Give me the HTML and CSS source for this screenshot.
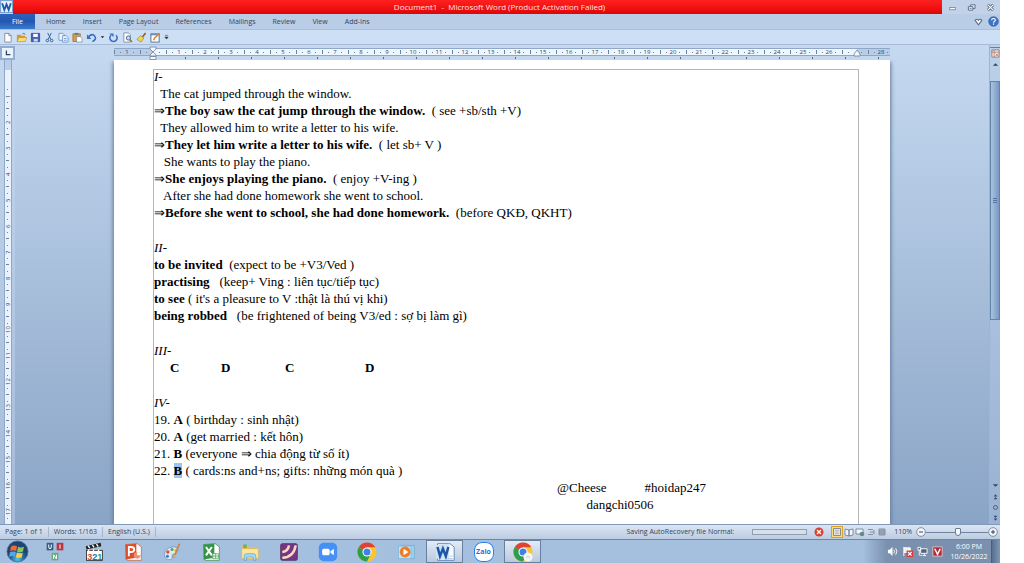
FILE: index.html
```
<!DOCTYPE html>
<html lang="vi">
<head>
  <meta charset="utf-8">
  <title>Document1 - Microsoft Word</title>
  <link rel="stylesheet" href="styles.css">
</head>
<body>
  <div class="desktop">
    <header class="titlebar">
      <svg class="app-icon" viewBox="0 0 12 12"><rect x=".5" y=".5" width="11" height="11" fill="#e8f2fc" stroke="#7ba4d4"/><path d="M2 3l2 6 2-5 2 5 2-6" fill="none" stroke="#1c5aa8" stroke-width="1.7"/></svg>
      <div class="title">Document1&nbsp; -&nbsp; Microsoft Word (Product Activation Failed)</div>
      <div class="window-buttons">
        <button aria-label="Minimize"><svg viewBox="0 0 10 10"><rect x="2" y="5" width="6" height="2.5" fill="#fff" stroke="#66778e" stroke-width=".8"/></svg></button>
        <button aria-label="Restore"><svg viewBox="0 0 10 10" fill="#eef4fb" stroke="#56677f"><path d="M4 2h5v4H4z"/><path d="M1.500 4h5v4h-5zM3 6h2"/></svg></button>
        <button aria-label="Close"><svg viewBox="0 0 10 10" fill="none"><path d="M2 2l6 6M8 2L2 8" stroke="#56677f" stroke-width="3"/><path d="M2 2l6 6M8 2L2 8" stroke="#fff" stroke-width="1.200"/></svg></button>
      </div>
    </header>

    <nav class="tabs">
      <button class="tab tab-file">File</button>
      <button class="tab">Home</button>
      <button class="tab">Insert</button>
      <button class="tab">Page Layout</button>
      <button class="tab">References</button>
      <button class="tab">Mailings</button>
      <button class="tab">Review</button>
      <button class="tab">View</button>
      <button class="tab">Add-Ins</button>
      <div class="tabs-right">
        <button aria-label="Expand ribbon"><svg viewBox="0 0 10 10"><path d="M2 4q1.500-2 3 0q1.500-2 3 0L5 8z" fill="#fff" stroke="#5d6f88"/></svg></button>
        <button aria-label="Help"><svg viewBox="0 0 12 12"><circle cx="6" cy="6" r="5.300" fill="#3d74c8" stroke="#2a559c" stroke-width=".6"/><path d="M4 4.700q0-2 2-2t2 1.700q0 1-1 1.500T6 7.300M6 8.300v1.300" fill="none" stroke="#fff" stroke-width="1.300"/></svg></button>
      </div>
    </nav>

    <div class="quick-access">
      <button aria-label="New"><svg viewBox="0 0 12 12"><path d="M3 1.500h4.500L10 4v7H3z" fill="#fff" stroke="#68788f" stroke-width=".8"/><path d="M7.500 1.500V4H10" fill="none" stroke="#68788f" stroke-width=".8"/></svg></button>
      <button aria-label="Open"><svg viewBox="0 0 12 12"><path d="M1 3h4l1 1h4v6H1z" fill="#d69a28"/><path d="M3 6h9l-2 4.500H1z" fill="#fbdc7c" stroke="#b9821d" stroke-width=".6"/><path d="M7 2q2-2 3 1" fill="none" stroke="#4776b5"/></svg></button>
      <button aria-label="Save"><svg viewBox="0 0 12 12"><path d="M1.500 1.500h9v9h-9z" fill="#4660b4" stroke="#2c3f87" stroke-width=".8"/><path d="M3.500 2h5v3.500h-5z" fill="#fff"/><path d="M4 7.500h4.500v3H4z" fill="#c9d4ee"/></svg></button>
      <button aria-label="Cut"><svg viewBox="0 0 12 12" fill="none" stroke="#36598f"><path d="M4 1l3.500 7M8 1L4.500 8"/><circle cx="3.700" cy="9.300" r="1.400"/><circle cx="8.300" cy="9.300" r="1.400"/></svg></button>
      <button aria-label="Copy"><svg viewBox="0 0 12 12" fill="#edf4fd" stroke="#5b86c0" stroke-width=".8"><path d="M1 1.500h4L7 3v6H1z"/><path d="M5 4h4l2 2v5H5z"/><path d="M6.500 7h3M6.500 9h3"/></svg></button>
      <button aria-label="Paste"><svg viewBox="0 0 12 12"><rect x="1" y="2" width="8" height="8.500" fill="#d8a03c" stroke="#96671a" stroke-width=".7"/><rect x="3" y="1" width="4" height="2" fill="#68788f"/><path d="M5 5h4l2 2v4H5z" fill="#fff" stroke="#6f7d90" stroke-width=".7"/></svg></button>
      <button aria-label="Undo"><svg viewBox="0 0 12 12"><path d="M3 5q4-4 6.500-.5T7 10.500" fill="none" stroke="#3a6fc0" stroke-width="1.800"/><path d="M1 2.500v5h5z" fill="#3a6fc0"/></svg></button>
      <button class="small-arrow" aria-label="Undo list"><svg viewBox="0 0 6 6"><path d="M1 2h4L3 4.500z" fill="#222"/></svg></button>
      <button aria-label="Repeat"><svg viewBox="0 0 12 12"><path d="M3.200 3.500a4 4 0 1 0 5.600 0" fill="none" stroke="#3a6fc0" stroke-width="1.700"/><path d="M1.500 1.500h4.500v4z" fill="#3a6fc0"/></svg></button>
      <button aria-label="Print preview"><svg viewBox="0 0 12 12"><path d="M2 1h5l2 2v8H2z" fill="#fff" stroke="#68788f" stroke-width=".8"/><circle cx="7" cy="6.500" r="2.300" fill="#c5dcf5" stroke="#4d6486"/><path d="M8.500 8.500l2.500 2.500" stroke="#9b6d2d" stroke-width="1.500"/></svg></button>
      <button aria-label="Format painter"><svg viewBox="0 0 12 12"><path d="M10.500 1L7 5.500" stroke="#8b6128" stroke-width="1.700"/><path d="M5 4l3.500 2.500L5.500 11 1 8z" fill="#f2d552" stroke="#9d8125" stroke-width=".7"/></svg></button>
      <button aria-label="Edit"><svg viewBox="0 0 12 12"><rect x="1" y="2" width="9" height="9" fill="#fff" stroke="#4c6d9c"/><path d="M1 3h9" stroke="#4c6d9c"/><path d="M4 9l1-2.500L10.500 1.500" fill="none" stroke="#d18a35" stroke-width="1.600"/></svg></button>
      <button class="small-arrow" aria-label="Customize"><svg viewBox="0 0 6 6"><path d="M1 1h4M1 3h4L3 5.500z" fill="#333" stroke="#333" stroke-width=".6"/></svg></button>
    </div>

    <div class="workspace">
      <div class="side-ruler">
        <button class="tab-selector" aria-label="Tab selector"><svg viewBox="0 0 10 10"><path d="M3 2v5h5" fill="none" stroke="#35465e" stroke-width="1.600"/></svg></button>
        <div class="v-ruler">
          <span></span><span>1</span><span>2</span><span>3</span><span>4</span><span>5</span><span>6</span><span>7</span><span>8</span><span>9</span><span>10</span><span>11</span><span>12</span><span>13</span><span>14</span><span>15</span><span>16</span><span>17</span>
        </div>
      </div>

      <main class="canvas">
        <div class="ruler-row">
          <div class="h-ruler">
            <span>1</span><span></span><span>1</span><span>2</span><span>3</span><span>4</span><span>5</span><span>6</span><span>7</span><span>8</span><span>9</span><span>10</span><span>11</span><span>12</span><span>13</span><span>14</span><span>15</span><span>16</span><span>17</span><span>18</span><span>19</span><span>20</span><span>21</span><span>22</span><span>23</span><span>24</span><span>25</span><span>26</span><span></span><span>28</span>
          </div>
          <svg class="indent indent-left" viewBox="0 0 8 14" fill="#f3f8fe" stroke="#71829b" stroke-width=".8"><path d="M1 1h6v2L4 6 1 3zM4 6l3 3v1H1V9zM1 10.500h6v3H1z"/></svg>
          <svg class="indent indent-right" viewBox="0 0 8 8" fill="#f3f8fe" stroke="#71829b" stroke-width=".8"><path d="M4 1l3 4v2H1V5z"/></svg>
        </div>
        <article class="page">
          <div class="text-area">
            <section>
              <p><i>I-</i></p>
              <p>  The cat jumped through the window.</p>
              <p>⇒<b>The boy saw the cat jump through the window.</b>  ( see +sb/sth +V)</p>
              <p>  They allowed him to write a letter to his wife.</p>
              <p>⇒<b>They let him write a letter to his wife.</b>  ( let sb+ V )</p>
              <p>   She wants to play the piano.</p>
              <p>⇒<b>She enjoys playing the piano.</b>  ( enjoy +V-ing )</p>
              <p>   After she had done homework she went to school.</p>
              <p>⇒<b>Before she went to school, she had done homework.</b>  (before QKĐ, QKHT)</p>
            </section>
            <section>
              <p><i>II-</i></p>
              <p><b>to be invited</b>  (expect to be +V3/Ved )</p>
              <p><b>practising</b>   (keep+ Ving : liên tục/tiếp tục)</p>
              <p><b>to see</b> ( it's a pleasure to V :thật là thú vị khi)</p>
              <p><b>being robbed</b>   (be frightened of being V3/ed : sợ bị làm gì)</p>
            </section>
            <section>
              <p><i>III-</i></p>
              <p class="answers"><b>C</b><b>D</b><b>C</b><b>D</b></p>
            </section>
            <section>
              <p><i>IV-</i></p>
              <p>19. <b>A</b> ( birthday : sinh nhật)</p>
              <p>20. <b>A</b> (get married : kết hôn)</p>
              <p>21. <b>B</b> (everyone ⇒ chia động từ số ít)</p>
              <p>22. <b class="selected">B</b> ( cards:ns and+ns; gifts: những món quà )</p>
            </section>
            <footer class="signature">
              <p><span>@Cheese</span><span>#hoidap247</span></p>
              <p>dangchi0506</p>
            </footer>
          </div>
        </article>
      </main>

      <div class="scrollbar">
        <div class="split"></div>
        <button class="ruler-toggle" aria-label="View ruler"><svg viewBox="0 0 10 10"><path d="M1 1h8v8H1z" fill="#fbefea" stroke="#8d7c83"/><path d="M1 3.500h8M3.500 1v8M5 5l3 3M8 5L5 8" stroke="#a1655e" stroke-width=".8"/></svg></button>
        <button aria-label="Scroll up"><svg viewBox="0 0 10 10"><path d="M2 6.500h6L5 3.500z" fill="#35465e"/></svg></button>
        <div class="track"><div class="thumb"></div></div>
        <button aria-label="Scroll down"><svg viewBox="0 0 10 10"><path d="M2 3.500h6L5 6.500z" fill="#35465e"/></svg></button>
        <button aria-label="Previous page"><svg viewBox="0 0 10 10"><path d="M3 5h4L5 2.500zM3 8h4L5 5.500z" fill="#35465e"/></svg></button>
        <button aria-label="Select browse object"><svg viewBox="0 0 10 10"><circle cx="5" cy="5" r="2.200" fill="none" stroke="#45566e"/></svg></button>
        <button aria-label="Next page"><svg viewBox="0 0 10 10"><path d="M3 2h4L5 4.500zM3 5h4L5 7.500z" fill="#35465e"/></svg></button>
      </div>
    </div>

    <div class="statusbar">
      <span class="status-item">Page: 1 of 1</span>
      <span class="status-item">Words: 1/163</span>
      <span class="status-item">English (U.S.)</span>
      <label class="saving" for="recovery">Saving AutoRecovery file Normal:</label>
      <progress id="recovery" value="0" max="100"></progress>
      <button class="cancel" aria-label="Cancel"><svg viewBox="0 0 10 10"><circle cx="5" cy="5" r="4.500" fill="#d8402f"/><path d="M3 3l4 4M7 3L3 7" stroke="#fff" stroke-width="1.300"/></svg></button>
      <div class="views">
        <button class="view-active" aria-label="Print layout"><svg viewBox="0 0 10 10"><path d="M1.500 1.500h7v7h-7z" fill="#e3e3df" stroke="#8a8c92"/><path d="M3 3.500h4M3 5h4M3 6.500h4" stroke="#a9adb5" stroke-width=".7"/></svg></button>
        <button aria-label="Full screen reading"><svg viewBox="0 0 10 10" fill="#f3f6fa" stroke="#67788f" stroke-width=".8"><path d="M1 2l4 1v6L1 8zM9 2L5 3v6l4-1z"/></svg></button>
        <button aria-label="Web layout"><svg viewBox="0 0 10 10"><path d="M1 2h7v5H1z" fill="#f3f6fa" stroke="#67788f" stroke-width=".8"/><circle cx="7" cy="7" r="2.300" fill="#5c8f87"/></svg></button>
        <button aria-label="Outline"><svg viewBox="0 0 10 10" fill="none" stroke="#8090a6"><path d="M2 2.500h5M4 5h4M2 7.500h5M8 3v4"/></svg></button>
        <button aria-label="Draft"><svg viewBox="0 0 10 10" fill="#a3b0c2" stroke="#8090a6"><path d="M2 2h6v6H2zM2 4h6M2 6h6"/></svg></button>
      </div>
      <label class="zoom-value" for="zoom">110%</label>
      <button class="round" aria-label="Zoom out"><svg viewBox="0 0 10 10"><circle cx="5" cy="5" r="4.300" fill="#f2f5fa" stroke="#67778f" stroke-width=".8"/><path d="M3 5h4" stroke="#34455d"/></svg></button>
      <input id="zoom" class="zoom" type="range" min="0" max="100" value="51">
      <button class="round" aria-label="Zoom in"><svg viewBox="0 0 10 10"><circle cx="5" cy="5" r="4.300" fill="#f2f5fa" stroke="#67778f" stroke-width=".8"/><path d="M3 5h4M5 3v4" stroke="#34455d"/></svg></button>
    </div>

    <div class="taskbar">
      <button class="start" aria-label="Start"><svg viewBox="0 0 24 24"><defs><radialGradient id="orb" cy=".85"><stop offset="0" stop-color="#56c7ee"/><stop offset=".6" stop-color="#28679f"/><stop offset="1" stop-color="#1d4473"/></radialGradient></defs><circle cx="12" cy="12" r="11" fill="url(#orb)" stroke="#4e6f95" stroke-width=".8"/><path d="M5 7q3-2 6.500-.5L10.500 11.500Q7.500 10 4.300 11.700z" fill="#ef6a34"/><path d="M12.600 7q3 1.500 6.200 0l-1.100 5q-3 1.600-6.200-.1z" fill="#8cc751"/><path d="M4 12.900q3.200-1.700 6.300-.2l-1.100 4.800q-3-1.500-5.900.2z" fill="#50a8e8"/><path d="M11.400 13.100q3 1.600 6.100.1l-1.100 4.900q-3 1.400-6.100-.1z" fill="#fccd3e"/></svg></button>

      <div class="apps">
        <button class="app" aria-label="UniKey tiles"><svg viewBox="0 0 24 24"><rect x="2" y="1" width="8" height="9" fill="#315b88"/><rect x="14" y="1" width="8" height="9" fill="#b83542"/><rect x="8" y="13" width="8" height="9" fill="#68aa79"/><g fill="none" stroke="#fff" stroke-width="1.200"><path d="M4.500 3v3q0 2 1.500 2t1.500-2v-3M18 3v5M10.300 20.300v-5l3.400 5v-5"/></g></svg></button>
        <button class="app" aria-label="Media player classic"><svg viewBox="0 0 24 24"><rect x="3" y="10" width="19" height="12" fill="#fff" stroke="#222"/><path d="M2 5l18-4 .8 4L3 9z" fill="#222"/><path d="M5 4.500l2 2.900M10 3.500l2 2.900M15 2.500l2 2.900M6 9l-1 2M12 9l-1 2M18 9l-1 2" stroke="#fff" stroke-width="1.600"/><g class="digits"><text x="4" y="21" fill="#de4b31">3</text><text x="10" y="21" fill="#2374b7">2</text><text x="16" y="21" fill="#2d9654">1</text></g></svg></button>
        <button class="app" aria-label="PowerPoint"><svg viewBox="0 0 24 24"><path d="M3 3l14-1 5 4v16H5z" fill="#fff" stroke="#d06a49"/><path d="M3 3l13-1v17L3 21z" fill="#dc4e2b"/><path d="M7 17V6h2.500q4 0 4 3T9.500 12H7" fill="none" stroke="#fff" stroke-width="2.200"/><circle cx="17" cy="16" r="4" fill="#ef9270"/><path d="M17 16v-4a4 4 0 0 1 4 4z" fill="#fff"/></svg></button>
        <button class="app" aria-label="Paint"><svg viewBox="0 0 24 24"><path d="M3 15Q3 8 12 6q8-1 7 5-.5 3-4 3t-3 4-4 3q-5 0-5-6z" fill="#dceaf7" stroke="#7997b8"/><circle cx="7" cy="12" r="2" fill="#d64f3e"/><circle cx="12" cy="9" r="1.800" fill="#4ba361"/><circle cx="6.500" cy="17" r="1.800" fill="#3878c8"/><circle cx="16" cy="10" r="1.600" fill="#ecbd37"/><path d="M21 2L14 19" stroke="#ca8448" stroke-width="2"/><path d="M15 15l-2 6 4-5z" fill="#e3b463"/></svg></button>
        <button class="app" aria-label="Excel"><svg viewBox="0 0 24 24"><path d="M3 3l14-1 5 4v16H5z" fill="#fff" stroke="#4f965c"/><path d="M3 3l13-1v17L3 21z" fill="#35934a"/><path d="M6 6l7 10M13 6L6 16" stroke="#fff" stroke-width="2.400"/><path d="M14 14h7v6h-7zM14 17h7M17.500 14v6" fill="#e9f5e9" stroke="#67aa70"/></svg></button>
        <button class="app" aria-label="Explorer"><svg viewBox="0 0 24 24"><path d="M2 4h7l2 2h10v14H2z" fill="#e6bd58"/><path d="M4 3h4v4H4z" fill="#69ad67"/><path d="M2 8h20v12H2z" fill="#fae8a0" stroke="#d7b45b" stroke-width=".8"/><path d="M5 22v-5q0-3 3-3h8q3 0 3 3v5h-3v-4H8v4z" fill="#a8d9f3" stroke="#5f9dc9" stroke-width=".8"/></svg></button>
        <button class="app" aria-label="Flash tool"><svg viewBox="0 0 24 24"><rect x="2" y="2" width="20" height="20" rx="2" fill="#783583" stroke="#543061"/><path d="M4 12Q11 11 12 4M4 19Q18 18 20 4" fill="none" stroke="#f2dcc0" stroke-width="3"/></svg></button>
        <button class="app" aria-label="Zoom"><svg viewBox="0 0 24 24"><rect x="1" y="1" width="22" height="22" rx="6" fill="#468ff4"/><rect x="5" y="8" width="9" height="8" rx="2" fill="#fff"/><path d="M15 11l4-3v8l-4-3z" fill="#fff"/></svg></button>
        <button class="app" aria-label="Chrome"><svg viewBox="0 0 24 24"><circle cx="12" cy="12" r="11.500" fill="#fbc52f"/><path d="M12 12L2 6.300A11.500 11.500 0 0 1 22 6.300H12z" fill="#df4334"/><path d="M12 12L2 6.300A11.500 11.500 0 0 0 12 23.500l4.600-9z" fill="#2f9d50"/><circle cx="12" cy="12" r="5.500" fill="#fff"/><circle cx="12" cy="12" r="4.200" fill="#4080e8"/></svg></button>
        <button class="app" aria-label="Media Player"><svg viewBox="0 0 24 24"><rect x="6" y="4" width="16" height="16" fill="#9ed1ed" stroke="#76b1d6"/><rect x="3" y="5" width="15" height="15" fill="#c3e2f4" stroke="#84b9da"/><circle cx="11" cy="12" r="6.500" fill="#f07d22"/><path d="M9 8l6 4-6 4z" fill="#fff"/></svg></button>
        <button class="app app-open" aria-label="Word"><svg viewBox="0 0 24 24"><path d="M3 2h15l5 4v16H3z" fill="#f8fbff" stroke="#4f7ab5"/><path d="M1 4l16-2v18L1 20z" fill="#cfe1f6"/><path d="M3 6l3 11 3.500-9 3.500 9 3-11" fill="none" stroke="#1c58a6" stroke-width="3"/><path d="M15 20h6M18 17h3" stroke="#9db8db"/></svg></button>
        <button class="app zalo" aria-label="Zalo"><span>Zalo</span></button>
        <button class="app app-open" aria-label="Chrome window"><svg viewBox="0 0 24 24"><circle cx="12" cy="12" r="11.500" fill="#fbc52f"/><path d="M12 12L2 6.300A11.500 11.500 0 0 1 22 6.300H12z" fill="#df4334"/><path d="M12 12L2 6.300A11.500 11.500 0 0 0 12 23.500l4.600-9z" fill="#2f9d50"/><circle cx="12" cy="12" r="5.500" fill="#fff"/><circle cx="12" cy="12" r="4.200" fill="#4080e8"/><circle cx="18" cy="18" r="5.500" fill="#f5f5f5"/><path d="M16 19l2-2 2 2" fill="none" stroke="#bbb"/></svg></button>
      </div>

      <div class="tray">
        <button aria-label="Volume"><svg viewBox="0 0 12 12"><path d="M1 4h2l3-3v10L3 8H1z" fill="#fff"/><path d="M7.500 4q1.500 2 0 4M9.500 2.500q2.500 3.500 0 7" fill="none" stroke="#fff"/></svg></button>
        <button aria-label="Action center"><svg viewBox="0 0 12 12"><path d="M2 1v10M2 2h7v5H2" fill="#eee" stroke="#fff"/><rect x="5" y="5" width="7" height="7" fill="#d83a32"/><path d="M6.500 6.500l4 4M10.500 6.500l-4 4" stroke="#fff" stroke-width="1.300"/></svg></button>
        <button aria-label="Network"><svg viewBox="0 0 12 12"><path d="M4 3h7v5H4zM6 10.500h4M8 8v2M1 1.500h3v3H1zM2.500 4v6h3" fill="#53657c" stroke="#fff"/></svg></button>
        <button aria-label="Vietnamese input"><svg viewBox="0 0 12 12"><rect x="1" y="1" width="10" height="10" fill="#b62732" stroke="#f0d6d8" stroke-width=".8"/><path d="M3 3l3 6 3-6" fill="none" stroke="#fff" stroke-width="1.600"/></svg></button>
        <div class="clock"><time>6:00 PM</time><time>10/26/2022</time></div>
      </div>
      <button class="show-desktop" aria-label="Show desktop"></button>
    </div>
  </div>
</body>
</html>
```
FILE: styles.css
```
* {
  box-sizing: border-box;
}

body {
  margin: 0;
  background: #fff;
  font-family: "Open Sans", "Noto Sans", sans-serif;
  font-size: 7px;
  line-height: 10px;
  color: #34445c;
}

button {
  display: flex;
  align-items: center;
  justify-content: center;
  padding: 0;
  border: 0;
  background: none;
  font: inherit;
  color: inherit;
}

svg {
  display: block;
}

.desktop {
  display: flex;
  flex-direction: column;
  height: 100vh;
  margin-right: 24px;
  background: #c4d7ee;
}

/* Title bar */
.titlebar {
  display: flex;
  flex: 0 0 14px;
  background: #c2d2e8;
}

.app-icon {
  width: 13px;
  height: 13px;
}

.title {
  flex: 1;
  padding-left: 44px;
  background: linear-gradient(#ff2020, #f01010 60%, #dc0606);
  color: #ffe3e3;
  font-size: 8px;
  line-height: 14px;
  text-align: center;
}

.window-buttons {
  display: flex;
  align-items: center;
  justify-content: space-between;
  width: 58px;
  padding: 0 5px 0 6px;
}

.window-buttons svg {
  width: 9px;
  height: 9px;
}

/* Ribbon tabs */
.tabs {
  display: flex;
  flex: 0 0 16px;
  gap: 17px;
  border-bottom: 1px solid #a9bfdb;
  background: #bacde6;
}

.tab-file {
  width: 35px;
  margin-right: -6px;
  background: linear-gradient(#2b62bd, #2458b0 50%, #3b7bd2);
  color: #fff;
}

.tabs-right {
  display: flex;
  gap: 4px;
  margin-left: auto;
  padding-right: 1px;
}

.tabs-right svg {
  width: 11px;
  height: 11px;
}

/* Quick access toolbar */
.quick-access {
  display: flex;
  align-items: center;
  flex: 0 0 15px;
  gap: 3px;
  padding-left: 2px;
  border-bottom: 1px solid #a5bbd8;
  background: #cddff5;
}

.quick-access svg {
  width: 11px;
  height: 11px;
}

.quick-access .small-arrow svg {
  width: 5px;
  height: 6px;
}

/* Document area */
.workspace {
  display: flex;
  flex: 1;
  min-height: 0;
}

.side-ruler {
  display: flex;
  flex-direction: column;
  width: 15px;
  padding-top: 1px;
  background: linear-gradient(#c5d8ef, #a4bad8);
}

.tab-selector {
  flex: 0 0 14px;
  width: 15px;
  border: 2px solid #93add0;
  background: #eaf3fd;
}

.tab-selector svg {
  width: 8px;
  height: 8px;
}

.v-ruler {
  flex: 1;
  min-height: 0;
  width: 8px;
  margin-left: 4px;
  overflow: hidden;
  border: solid #8fa7c8;
  border-width: 0 1px;
  background: linear-gradient(#b7cde8 10px, #eaf3fd 10px);
}

.v-ruler span {
  display: block;
  height: 26px;
  writing-mode: vertical-rl;
  transform: rotate(180deg);
  font-size: 6px;
  line-height: 6px;
  text-align: center;
  background:
    linear-gradient(#6f829c, #6f829c) center top / 3px 1px no-repeat,
    linear-gradient(#6f829c, #6f829c) center 6px / 1px 1px no-repeat,
    linear-gradient(#6f829c, #6f829c) center 19px / 1px 1px no-repeat;
}

.v-ruler span:first-child {
  height: 23px;
}

.canvas {
  display: flex;
  flex-direction: column;
  align-items: center;
  flex: 1;
  min-width: 0;
  background: linear-gradient(#c5d9f0, #8aa4c6);
}

.ruler-row {
  position: relative;
  flex: 0 0 15px;
  width: 100%;
  max-width: 776px;
  padding-top: 3px;
  background: repeating-linear-gradient(to right, transparent 0 32px, #566880 32px 33px) 6px 12px / 776px 2px no-repeat;
}

.h-ruler {
  display: flex;
  overflow: hidden;
  height: 8px;
  border: solid #8fa7c8;
  border-width: 1px 0;
  background: linear-gradient(to right, #b7cde8 39px, #eef6fe 39px 743px, #b7cde8 743px);
}

.h-ruler span {
  flex: 0 0 26px;
  font-size: 6px;
  line-height: 6px;
  text-align: center;
  background:
    linear-gradient(#6f829c, #6f829c) left center / 1px 4px no-repeat,
    linear-gradient(#6f829c, #6f829c) 6px center / 1px 1px no-repeat,
    linear-gradient(#6f829c, #6f829c) 19px center / 1px 1px no-repeat;
}

.indent {
  position: absolute;
  width: 8px;
}

.indent-left {
  top: 1px;
  left: 35px;
  height: 14px;
}

.indent-right {
  top: 4px;
  right: 29px;
  height: 8px;
}

.page {
  display: flex;
  flex: 1;
  min-height: 0;
  width: 100%;
  max-width: 776px;
  padding: 9px 31px 0 39px;
  background: #fff;
  box-shadow: 0 3px 4px 1px #62789a;
  clip-path: inset(0 -6px 0 -6px);
}

.text-area {
  flex: 1;
  overflow: hidden;
  border: solid #b5b5b5;
  border-width: 1px 1px 0;
  font-family: "Liberation Serif", "Times New Roman", serif;
  font-size: 13px;
  line-height: 17px;
  color: #000;
}

.text-area p {
  margin: 0;
  white-space: pre;
}

.text-area section {
  margin-bottom: 18px;
}

.text-area section:first-child {
  margin-top: -2px;
}

.text-area section:last-of-type {
  margin-bottom: 0;
}

.answers {
  display: grid;
  grid-template-columns: 51px 64px 80px 40px;
  padding-left: 16px;
}

.selected {
  background: #9cc5ee;
}

.signature {
  width: 212px;
  margin-left: 360px;
  text-align: center;
}

.signature p:first-child {
  display: flex;
  justify-content: flex-end;
  gap: 38px;
  padding-right: 20px;
}

/* Scrollbar */
.scrollbar {
  display: flex;
  flex-direction: column;
  width: 11px;
  border-left: 1px solid #9db4d2;
  background: linear-gradient(#bcd0ea, #9ab2d3);
}

.scrollbar button {
  height: 11px;
}

.scrollbar svg {
  width: 9px;
  height: 9px;
}

.split {
  height: 3px;
  border-bottom: 1px solid #6c809c;
}

.track {
  flex: 1;
  padding-top: 11px;
}

.thumb {
  height: 60%;
  border: 1px solid #6582a9;
  background:
    repeating-linear-gradient(#58769f 0 1px, transparent 1px 2px) center / 4px 5px no-repeat,
    linear-gradient(to right, #a9c2e2, #7999c2);
}

/* Status bar */
.statusbar {
  display: flex;
  align-items: center;
  flex: 0 0 15px;
  padding-right: 2px;
  border-top: 1px solid #8299b8;
  background: linear-gradient(#dbe6f4, #bccce1);
}

.status-item {
  padding: 0 5px;
  border-right: 1px solid #a5b6ce;
}

.saving {
  margin-left: auto;
}

#recovery {
  width: 55px;
  height: 6px;
  margin: 0 7px 0 18px;
  border: 1px solid #8e9eb5;
  appearance: none;
}

#recovery::-webkit-progress-bar {
  background: #d6dfeb;
}

.statusbar svg {
  width: 10px;
  height: 10px;
}

.views {
  display: flex;
  gap: 1px;
  margin: 0 7px;
}

.view-active {
  width: 12px;
  height: 12px;
  border: 1px solid #dba321;
  background: #fbdd7c;
}

.zoom-value {
  margin-right: 4px;
}

.zoom {
  width: 62px;
  height: 10px;
  margin: 0;
  appearance: none;
  background: linear-gradient(#71839c, #71839c) center / 100% 1px no-repeat;
}

.zoom::-webkit-slider-thumb {
  width: 6px;
  height: 8px;
  border: 1px solid #687b95;
  border-radius: 1px 1px 3px 3px;
  background: #f4f7fb;
  appearance: none;
}

/* Taskbar */
.taskbar {
  display: flex;
  flex: 0 0 24px;
  border-top: 1px solid #6f87a6;
  background: #a5bfde;
}

.start {
  width: 34px;
  margin-right: 2px;
}

.start svg {
  width: 23px;
  height: 23px;
}

.apps {
  display: flex;
  gap: 2px;
}

.app {
  width: 37px;
}

.app svg {
  width: 20px;
  height: 20px;
}

.app-open {
  border: 1px solid #68809f;
  background: linear-gradient(#e3ebf5, #b9c9dd);
}

.digits {
  font-family: "Liberation Sans", sans-serif;
  font-size: 11px;
  font-weight: bold;
}

.zalo span {
  width: 20px;
  height: 20px;
  border-radius: 8px;
  background: #fff;
  box-shadow: inset 0 0 0 1px #287fe6;
  color: #1f72dd;
  font-weight: bold;
  line-height: 19px;
}

.tray {
  display: flex;
  align-items: center;
  gap: 4px;
  margin-left: auto;
  padding-left: 24px;
  background: linear-gradient(to right, #a5bfde, #7a90ae 24px);
}

.tray svg {
  width: 11px;
  height: 11px;
}

.clock {
  display: flex;
  flex-direction: column;
  width: 44px;
  color: #fff;
  text-align: center;
}

.show-desktop {
  width: 9px;
  border-left: 1px solid #4a5e7a;
  background: linear-gradient(to right, #56708f, #8198b5);
}
```
